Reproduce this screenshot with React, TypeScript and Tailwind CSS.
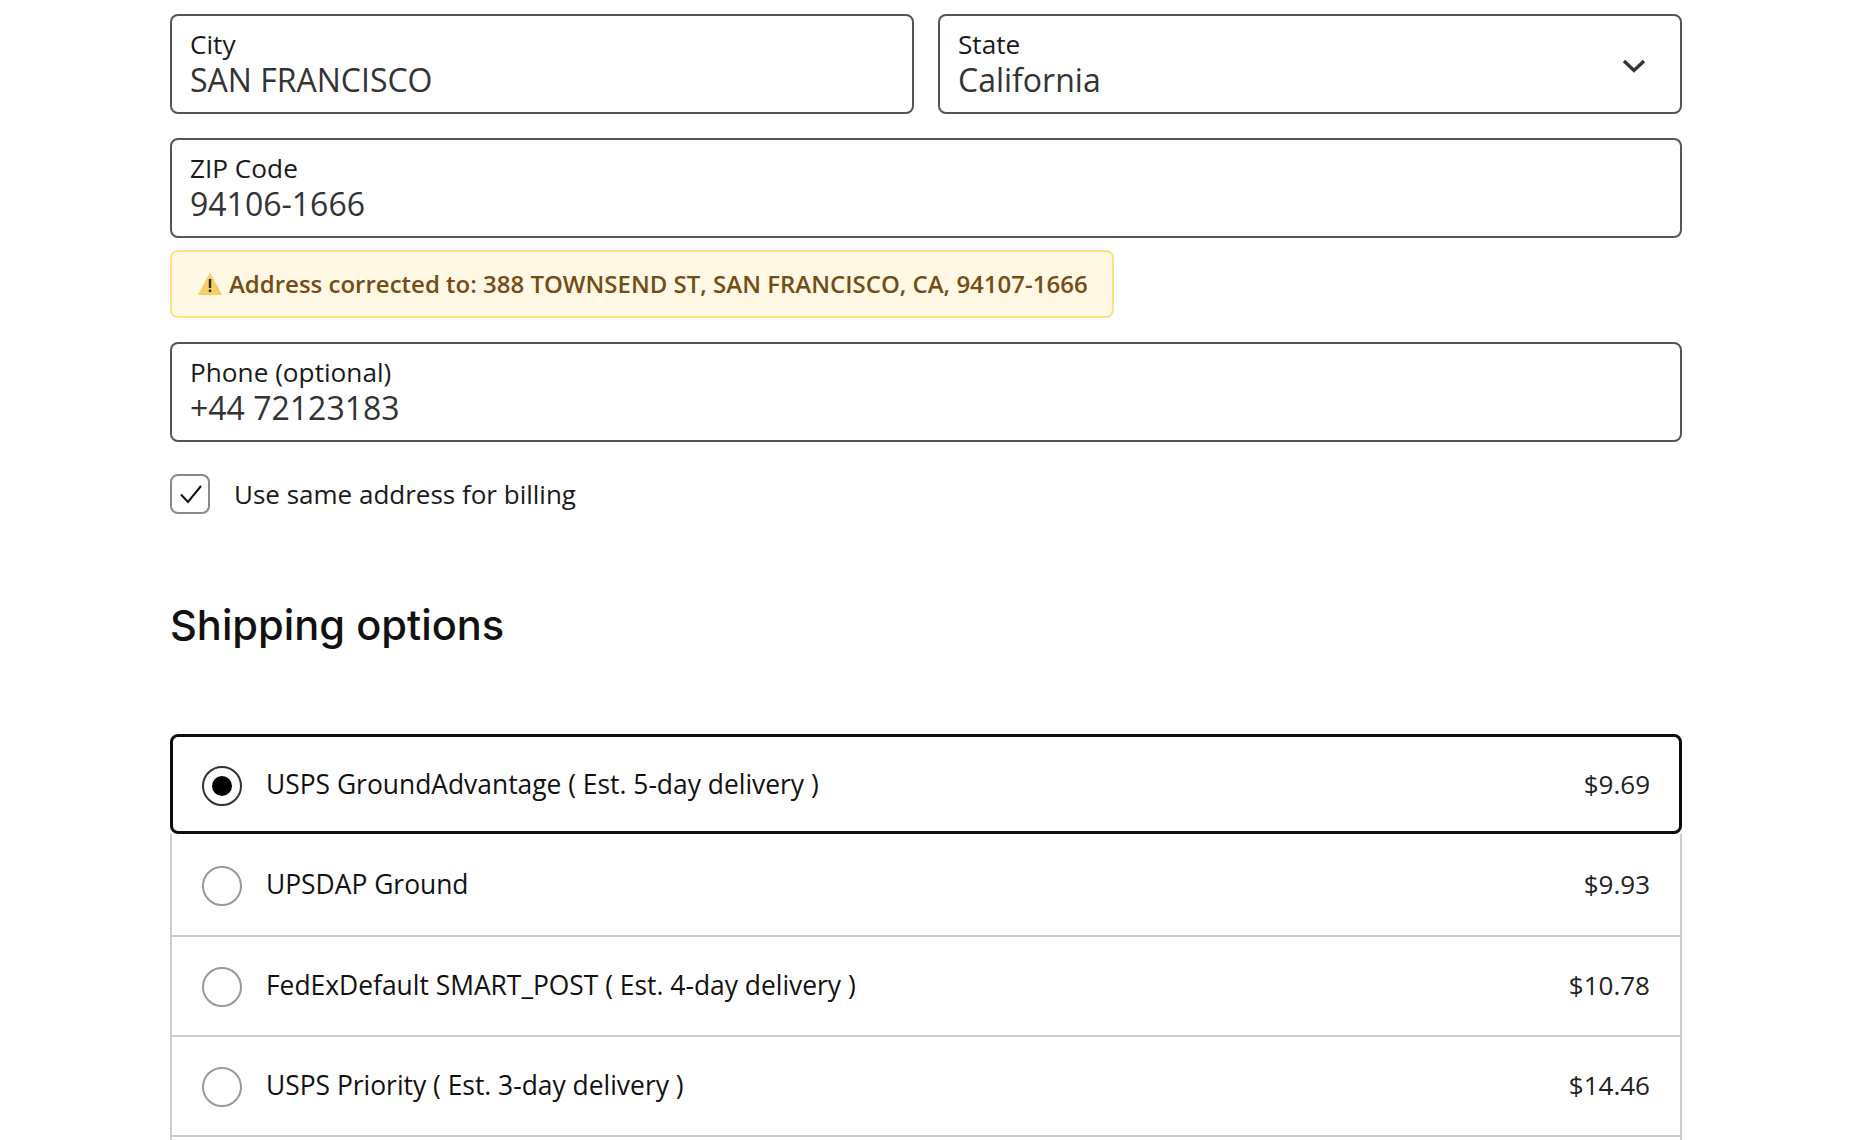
const fieldClass = "flex h-[100px] flex-col justify-center rounded-lg border-2 border-[#555555] bg-white px-[18px] pb-[5px]"

function Field({ label, value }: { label: string; value: string }) {
  return (
    <div className={fieldClass}>
      <span className="text-[26.2px] leading-[36px] text-[#1a1a1a]">{label}</span>
      <span className="text-[32px] leading-[36px] text-[#333333]">{value}</span>
    </div>
  )
}

function Radio({ checked }: { checked?: boolean }) {
  return (
    <span
      className={
        checked
          ? "mt-[2px] flex size-10 shrink-0 items-center justify-center rounded-full border-2 border-[#333333]"
          : "mt-[2px] flex size-10 shrink-0 items-center justify-center rounded-full border-2 border-[#999999]"
      }
    >
      {checked && <span className="size-5 rounded-full bg-black" />}
    </span>
  )
}

const options = [
  { name: "USPS GroundAdvantage ( Est. 5-day delivery )", price: "$9.69", row: "h-[100px] rounded-lg border-[3px] border-[#0d0d0d] pl-[29px] pr-[29px] pt-[2px]" },
  { name: "UPSDAP Ground", price: "$9.93", row: "h-[103px] border-x-2 border-b-2 border-[#cccccc] pl-[30px] pr-[30px]" },
  { name: "FedExDefault SMART_POST ( Est. 4-day delivery )", price: "$10.78", row: "h-[100px] border-x-2 border-b-2 border-[#cccccc] pl-[30px] pr-[30px]" },
  { name: "USPS Priority ( Est. 3-day delivery )", price: "$14.46", row: "h-[100px] border-x-2 border-b-2 border-[#cccccc] pl-[30px] pr-[30px]" },
]

export default function App() {
  return (
    <div className="h-[1140px] overflow-hidden bg-white pl-[170px] pr-[168px] pt-[14px] font-['Open_Sans',sans-serif]">
      <div className="grid grid-cols-2 gap-6">
        <Field label="City" value="SAN FRANCISCO" />
        <div className={`${fieldClass} relative`}>
          <span className="text-[26.2px] leading-[36px] text-[#1a1a1a]">State</span>
          <span className="text-[32px] leading-[36px] text-[#333333]">California</span>
          <svg
            className="absolute right-[34px] top-[43px]"
            width="24"
            height="14"
            viewBox="0 0 24 14"
            fill="none"
            stroke="#333333"
            strokeWidth="3.4"
          >
            <path d="M2 2l10 9.5L22 2" />
          </svg>
        </div>
      </div>

      <div className="mt-6">
        <Field label="ZIP Code" value="94106-1666" />
      </div>

      <div className="mt-[12px] flex h-[68px] w-[944px] items-center gap-[7px] rounded-lg border-2 border-[#fde08b] bg-[#fff8e5] pl-[26px]">
        <svg width="24" height="22" viewBox="0 0 24 22" className="shrink-0">
          <path d="M12 0.5L23.5 21.5H0.5Z" fill="#f6cd6a" stroke="#f6cd6a" strokeLinejoin="round" />
          <rect x="10.8" y="6" width="2.4" height="9" fill="#3a2a10" />
          <rect x="10.8" y="16.5" width="2.4" height="2.6" fill="#3a2a10" />
        </svg>
        <span className="whitespace-nowrap text-[24px] font-semibold text-[#744d15]">
          Address corrected to: 388 TOWNSEND ST, SAN FRANCISCO, CA, 94107-1666
        </span>
      </div>

      <div className="mt-[24px]">
        <Field label="Phone (optional)" value="+44 72123183" />
      </div>

      <div className="mt-[32px] flex items-center gap-6">
        <span className="flex size-10 items-center justify-center rounded-lg border-2 border-[#8a8a8a]">
          <svg width="24" height="22" viewBox="0 0 24 22" fill="none" stroke="#111111" strokeWidth="2" className="translate-x-px">
            <path d="M2 11.5l7 7.5L22 3" />
          </svg>
        </span>
        <span className="text-[26px] text-[#1a1a1a]">Use same address for billing</span>
      </div>

      <h2 className="mt-[81px] font-['Inter',sans-serif] text-[41.6px] font-medium leading-[60px] text-[#111111]">
        Shipping options
      </h2>

      <div className="mt-[79px]">
        {options.map((o, i) => (
          <div key={o.name} className={`flex items-center gap-6 ${o.row}`}>
            <Radio checked={i === 0} />
            <span className="mb-[2px] flex-1 text-[26.4px] leading-[36px] text-[#111111]">{o.name}</span>
            <span className="mb-[2px] text-[26px] leading-[36px] text-[#222222]">{o.price}</span>
          </div>
        ))}
        <div className="h-[100px] border-x-2 border-[#cccccc]" />
      </div>
    </div>
  )
}
